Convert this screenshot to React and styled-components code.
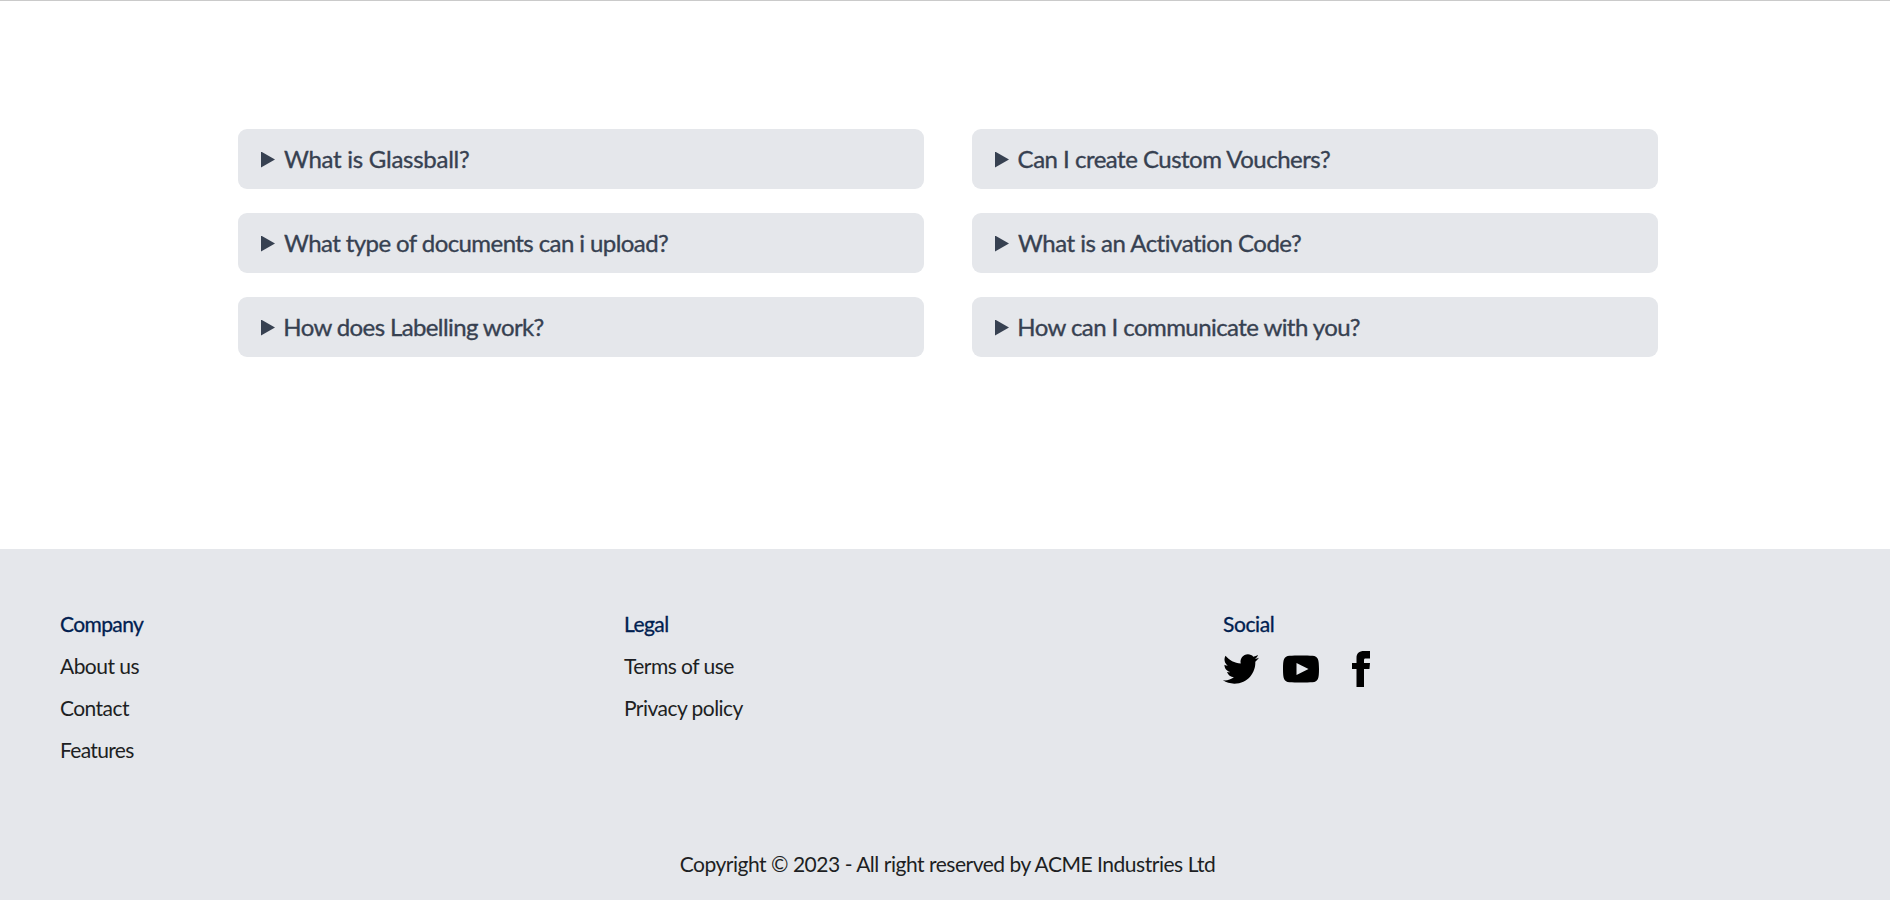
import React from 'react';
import styled, { createGlobalStyle } from 'styled-components';

const GlobalStyle = createGlobalStyle`
  *, *::before, *::after { box-sizing: border-box; }
  body { margin: 0; background: #fff; font-family: Lato, "Open Sans", sans-serif; }
`;

const Page = styled.div`
  min-height: 900px;
  display: flex;
  flex-direction: column;
  border-top: 1px solid #cacaca;
`;

const FaqSection = styled.main`
  flex: 1;
  display: flex;
  gap: 48px;
  padding: 128px 232px 0 238px;
`;

const FaqColumn = styled.div`
  flex: 1;
  display: flex;
  flex-direction: column;
  gap: 24px;
`;

const FaqItem = styled.details`
  background: #e5e7eb;
  border-radius: 9px;
`;

const Question = styled.summary`
  display: flex;
  align-items: center;
  height: 60px;
  padding: 0 23px;
  color: #374151;
  font-size: 24px;
  line-height: 36px;
  white-space: nowrap;
  letter-spacing: ${(p) => p.$tracking}px;
  -webkit-text-stroke: 0.35px #374151;
  cursor: pointer;
  list-style: none;

  &::before {
    content: "";
    width: 14px;
    height: 16px;
    margin: 1px ${(p) => 9 - p.$bearing}px 0 0;
    flex: none;
    background: #374151;
    clip-path: polygon(0 0, 100% 50%, 0 100%);
  }
`;

const FooterArea = styled.footer`
  height: 351px;
  background: #e5e7eb;
  font-size: 21px;
  line-height: 30px;
  color: #1d1f23;
`;

const FooterNav = styled.div`
  display: grid;
  grid-template-columns: 564px 599px 1fr;
  height: 300px;
  padding: 60px 60px 0;
`;

const NavColumn = styled.nav`
  display: flex;
  flex-direction: column;
  align-items: flex-start;
  gap: 12px;
`;

const NavTitle = styled.span`
  color: #002050;
  letter-spacing: ${(p) => p.$tracking}px;
  -webkit-text-stroke: 0.3px #002050;
`;

const NavLink = styled.a`
  letter-spacing: ${(p) => p.$tracking}px;
  white-space: nowrap;
  cursor: pointer;
`;

const SocialRow = styled.div`
  display: flex;
  gap: 24px;
`;

const SocialIcon = styled.svg`
  display: block;
  width: 36px;
  height: 36px;
  fill: #000;
`;

const Copyright = styled.p`
  margin: 0;
  padding-left: 5px;
  text-align: center;
  letter-spacing: -0.475px;
`;

const faqColumns = [
  [
    { text: 'What is Glassball?', tracking: -0.26, bearing: 0 },
    { text: 'What type of documents can i upload?', tracking: -0.58, bearing: 0 },
    { text: 'How does Labelling work?', tracking: -0.61, bearing: 0.7 },
  ],
  [
    { text: 'Can I create Custom Vouchers?', tracking: -0.5, bearing: 0.4 },
    { text: 'What is an Activation Code?', tracking: -0.49, bearing: 0 },
    { text: 'How can I communicate with you?', tracking: -0.57, bearing: 0.7 },
  ],
];

const navColumns = [
  {
    title: 'Company',
    tracking: -0.61,
    links: [
      { text: 'About us', tracking: -0.53 },
      { text: 'Contact', tracking: -0.56 },
      { text: 'Features', tracking: -0.68 },
    ],
  },
  {
    title: 'Legal',
    tracking: -0.55,
    links: [
      { text: 'Terms of use', tracking: -0.54 },
      { text: 'Privacy policy', tracking: -0.54 },
    ],
  },
];

const socialIcons = [
  {
    name: 'Twitter',
    path: 'M24 4.557c-.883.392-1.832.656-2.828.775 1.017-.609 1.798-1.574 2.165-2.724-.951.564-2.005.974-3.127 1.195-.897-.957-2.178-1.555-3.594-1.555-3.179 0-5.515 2.966-4.797 6.045-4.091-.205-7.719-2.165-10.148-5.144-1.29 2.213-.669 5.108 1.523 6.574-.806-.026-1.566-.247-2.229-.616-.054 2.281 1.581 4.415 3.949 4.89-.693.188-1.452.232-2.224.084.626 1.956 2.444 3.379 4.6 3.419-2.07 1.623-4.678 2.348-7.29 2.04 2.179 1.397 4.768 2.212 7.548 2.212 9.142 0 14.307-7.721 13.995-14.646.962-.695 1.797-1.562 2.457-2.549z',
  },
  {
    name: 'YouTube',
    path: 'M19.615 3.184c-3.604-.246-11.631-.245-15.23 0-3.897.266-4.356 2.62-4.385 8.816.029 6.185.484 8.549 4.385 8.816 3.6.245 11.626.246 15.23 0 3.897-.266 4.356-2.62 4.385-8.816-.029-6.185-.484-8.549-4.385-8.816zm-10.615 12.816v-8l8 3.993-8 4.007z',
  },
  {
    name: 'Facebook',
    path: 'M9 8h-3v4h3v12h5v-12h3.642l.358-4h-4v-1.667c0-.955.192-1.333 1.115-1.333h2.885v-5h-3.808c-3.596 0-5.192 1.583-5.192 4.615v3.385z',
  },
];

export default function App() {
  return (
    <>
      <GlobalStyle />
      <Page>
        <FaqSection>
          {faqColumns.map((items, i) => (
            <FaqColumn key={i}>
              {items.map((q) => (
                <FaqItem key={q.text}>
                  <Question $tracking={q.tracking} $bearing={q.bearing}>{q.text}</Question>
                </FaqItem>
              ))}
            </FaqColumn>
          ))}
        </FaqSection>
        <FooterArea>
          <FooterNav>
            {navColumns.map((col) => (
              <NavColumn key={col.title}>
                <NavTitle $tracking={col.tracking}>{col.title}</NavTitle>
                {col.links.map((l) => (
                  <NavLink key={l.text} $tracking={l.tracking}>{l.text}</NavLink>
                ))}
              </NavColumn>
            ))}
            <NavColumn>
              <NavTitle $tracking={-0.408}>Social</NavTitle>
              <SocialRow>
                {socialIcons.map((icon) => (
                  <SocialIcon key={icon.name} viewBox="0 0 24 24" role="img" aria-label={icon.name}>
                    <path d={icon.path} />
                  </SocialIcon>
                ))}
              </SocialRow>
            </NavColumn>
          </FooterNav>
          <Copyright>Copyright © 2023 - All right reserved by ACME Industries Ltd</Copyright>
        </FooterArea>
      </Page>
    </>
  );
}
